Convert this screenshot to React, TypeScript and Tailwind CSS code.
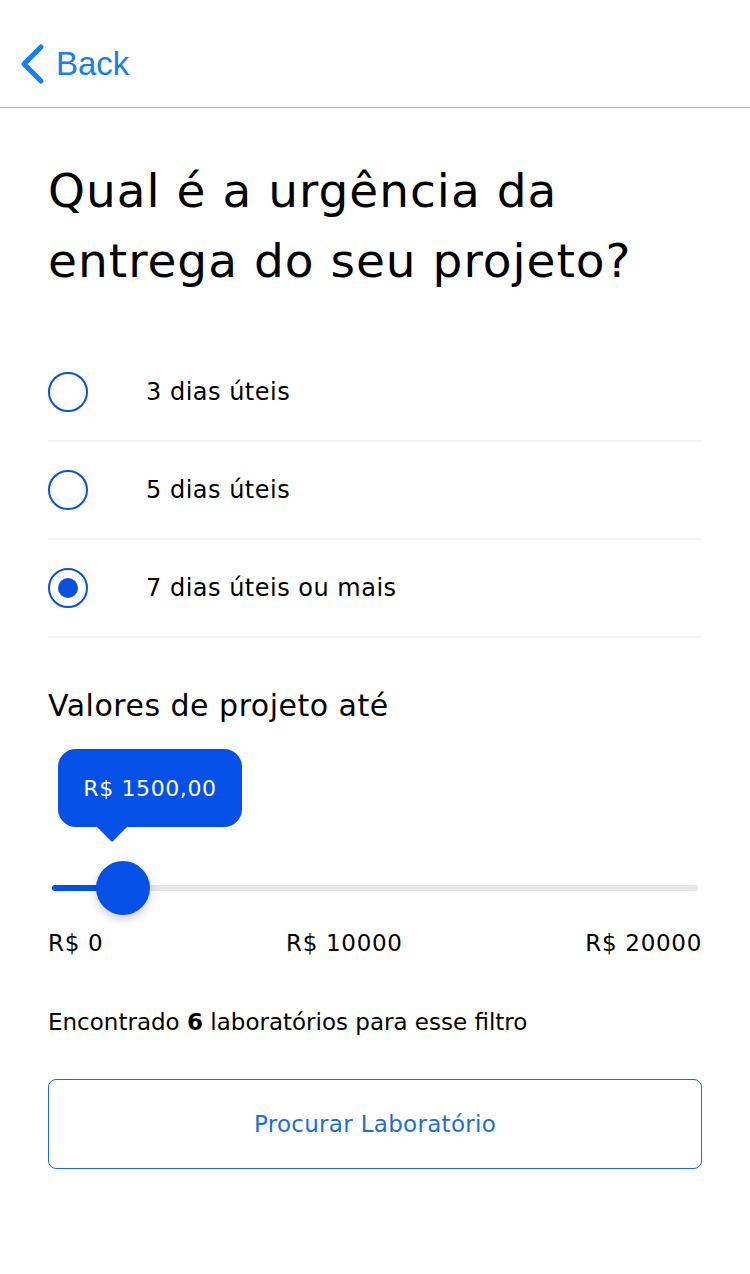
import { useState } from "react"

const options = ["3 dias úteis", "5 dias úteis", "7 dias úteis ou mais"]

const Radio = ({ checked }: { checked: boolean }) => (
  <div className="flex h-10 w-10 shrink-0 items-center justify-center rounded-full border-2 border-[#0a4fe0]">
    {checked && <div className="h-5 w-5 rounded-full bg-[#0a4fe0]" />}
  </div>
)

const App = () => {
  const [selected, setSelected] = useState(2)

  return (
    <div className="min-h-[1274px] w-full bg-white font-['DejaVu_Sans',sans-serif] text-black">
      {/* Nav bar */}
      <div className="flex h-[108px] items-center border-b border-[#b3b3b3] pl-[18px] pt-[20px]">
        <button className="flex items-center gap-[10px] text-[#157ef5]">
          <svg width="28" height="42" viewBox="0 0 28 42" fill="none">
            <path d="M23 4 L6 21 L23 38" stroke="currentColor" strokeWidth="5" strokeLinecap="round" strokeLinejoin="round" />
          </svg>
          <span className="font-['Liberation_Sans',sans-serif] text-[33px] leading-none">Back</span>
        </button>
      </div>

      <div className="px-12">
        {/* Question */}
        <h1 className="mt-[48px] text-[47px] leading-[70px] tracking-[1px]">
          Qual é a urgência da
          <br />
          entrega do seu projeto?
        </h1>

        {/* Options */}
        <div className="mt-[48px]">
          {options.map((label, i) => (
            <button
              key={label}
              onClick={() => setSelected(i)}
              className="flex h-[98px] w-full items-center border-b-2 border-[#f0f3f5] text-left"
            >
              <Radio checked={selected === i} />
              <span className="ml-[58px] text-[24px] tracking-[0.5px]">{label}</span>
            </button>
          ))}
        </div>

        {/* Price slider */}
        <h2 className="mt-[48px] text-[30px] leading-[40px] tracking-[0.5px]">Valores de projeto até</h2>

        <div className="mt-[23px] flex">
          <div className="relative ml-[10px] flex h-[78px] w-[184px] items-center justify-center rounded-[18px] bg-[#0550e6] text-[22px] tracking-[0.6px] text-white">
            R$ 1500,00
            <div className="absolute bottom-[-15px] left-[39px] h-0 w-0 border-x-[15px] border-t-[15px] border-x-transparent border-t-[#0550e6]" />
          </div>
        </div>

        <div className="relative mt-[34px] flex h-[54px] items-center px-[4px]">
          <div className="flex h-[6px] w-full items-center rounded-full bg-[#e6e6e6]">
            <div className="h-[6px] w-[72px] rounded-full bg-[#0550e6]" />
          </div>
          <div className="absolute left-[48px] top-0 h-[54px] w-[54px] rounded-full bg-[#0550e6] shadow-[0_4px_10px_rgba(0,0,0,0.2)]" />
        </div>

        <div className="mt-[13px] flex justify-between text-[23px] leading-[30px] tracking-[0.7px]">
          <span>R$ 0</span>
          <span>R$ 10000</span>
          <span>R$ 20000</span>
        </div>

        <p className="mt-[49px] text-[23px] leading-[30px]">
          Encontrado <b>6</b> laboratórios para esse filtro
        </p>

        <button className="mt-[42px] flex h-[90px] w-full items-center justify-center rounded-[8px] border border-[#1a6fd6] text-[23px] tracking-[0.3px] text-[#1a6fd6]">
          Procurar Laboratório
        </button>
      </div>
    </div>
  )
}

export default App
